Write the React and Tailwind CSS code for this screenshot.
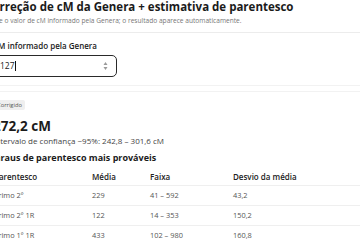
import React from 'react';

const rows = [
  { name: 'Primo 2º', media: '229', faixa: '41 – 592', desvio: '43,2' },
  { name: 'Primo 2º 1R', media: '122', faixa: '14 – 353', desvio: '150,2' },
  { name: 'Primo 1º 1R', media: '433', faixa: '102 – 980', desvio: '160,8' },
];

const App = () => {
  return (
    <div className="w-[360px] h-[240px] overflow-hidden bg-white text-[#1b1b1b] font-['Open_Sans',sans-serif]">
      <div className="ml-[-15px] w-[440px]">
        <div className="pb-[6px] border-b border-[#ececec]">
          <h1 className="text-[11.5px] font-bold leading-[14px]">
            Correção de cM da Genera + estimativa de parentesco
          </h1>
          <p className="text-[6.6px] text-[#777] leading-[10px] mt-[2px]">
            Digite o valor de cM informado pela Genera; o resultado aparece automaticamente.
          </p>
        </div>

        <div className="pl-[9px] pt-[7px] pb-[8px] border-b border-[#f2f2f2]">
          <label className="block text-[8px] font-semibold leading-[12px]">cM informado pela Genera</label>
          <div className="mt-[3px] w-[123px] h-[22px] rounded-[5px] border-[1.5px] border-[#2a2a2a] flex items-center pl-[5px] pr-[8px]">
            <span className="text-[8.5px] leading-none">127</span>
            <span className="w-px h-[10px] bg-[#111]" />
            <svg className="ml-auto" width="5" height="10" viewBox="0 0 5 10">
              <path d="M0.5 4 L2.5 1 L4.5 4 Z" fill="#9a9a9a" />
              <path d="M0.5 6 L2.5 9 L4.5 6 Z" fill="#9a9a9a" />
            </svg>
          </div>
        </div>

        <div className="mt-[5px] border-t border-[#f2f2f2] pl-[9px] pt-[8px]">
          <div className="w-fit bg-[#efefef] rounded-[2px] px-[3px] text-[5.8px] leading-[10px] text-[#555]">Corrigido</div>
          <div className="text-[13.5px] font-bold leading-[16px] mt-[8px] ml-[-1px]">272,2 cM</div>
          <div className="text-[8px] text-[#444] leading-[10px] mt-[2px] ml-[-1px]">
            Intervalo de confiança ~95%: 242,8 – 301,6 cM
          </div>
          <h2 className="text-[9px] font-bold leading-[12px] mt-[6px]">Graus de parentesco mais prováveis</h2>

          <div className="mt-[5px] text-[7.4px]">
            <div className="grid grid-cols-[98px_58px_83px_1fr] h-[17px] items-center text-[8px] font-semibold text-[#222] border-b border-[#efefef]">
              <div>Parentesco</div>
              <div>Média</div>
              <div>Faixa</div>
              <div>Desvio da média</div>
            </div>
            {rows.map((r) => (
              <div
                key={r.name}
                className="grid grid-cols-[98px_58px_83px_1fr] h-[20px] items-center text-[#555] border-b border-[#efefef]"
              >
                <div>{r.name}</div>
                <div>{r.media}</div>
                <div>{r.faixa}</div>
                <div>{r.desvio}</div>
              </div>
            ))}
          </div>
        </div>
      </div>
    </div>
  );
};

export default App;
